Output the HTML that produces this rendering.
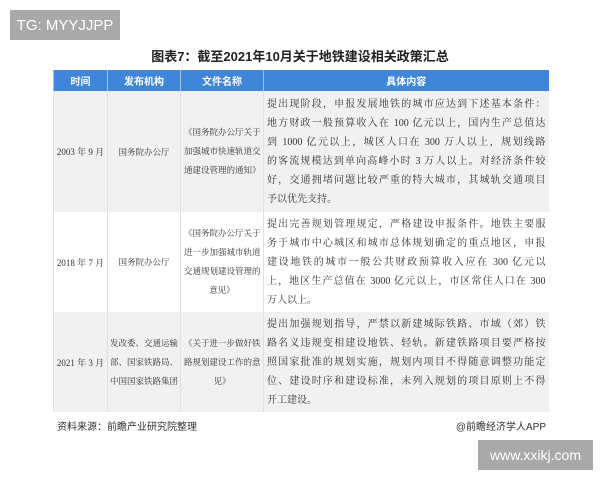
<!DOCTYPE html>
<html><head><meta charset="utf-8"><style>
*{margin:0;padding:0;box-sizing:border-box}
body{width:600px;height:480px;background:#fff;position:relative;font-family:"Liberation Serif","Noto Serif CJK SC","Noto Sans CJK SC",serif;color:#333;overflow:hidden}
.badge{position:absolute;background:#a9a9a9;color:#fff;font-family:"Liberation Sans",sans-serif;font-size:15px;display:flex;align-items:center;justify-content:center}
.title{position:absolute;top:46px;left:0;width:600px;text-align:center;font-family:"Liberation Sans","Noto Sans CJK SC",sans-serif;font-weight:bold;font-size:13px;color:#222}
table{position:absolute;left:53px;top:70px;width:495px;border-collapse:collapse;font-size:10px;table-layout:fixed}
th{background:#3f86db;color:#fff;height:21px;font-weight:bold;font-family:"Liberation Sans","Noto Sans CJK SC",sans-serif;border-left:1px solid #9fc3ee;font-size:10px;padding:0}
td{vertical-align:middle;text-align:center;border-left:1px solid #e0e0e0;padding:0 4px;overflow:hidden}
tr.g td{background:#f1f1f1}
.l{display:block;line-height:19px;text-align:justify;text-align-last:justify;white-space:nowrap}
.s{font-size:8.5px;padding:0 3px}
.o{font-size:8.5px;padding:0 3px}
.src{position:absolute;top:418px;font-size:10px;font-family:"Liberation Sans","Noto Sans CJK SC",sans-serif;color:#333}
</style></head><body>
<div class="badge" style="left:10px;top:10px;width:110px;height:30px">TG: MYYJJPP</div>
<div class="title">图表7：截至2021年10月关于地铁建设相关政策汇总</div>
<table>
<colgroup><col style="width:54px"><col style="width:73px"><col style="width:83px"><col style="width:285px"></colgroup>
<tr><th>时间</th><th>发布机构</th><th>文件名称</th><th>具体内容</th></tr>
<tr class="g" style="height:121px"><td style="white-space:nowrap;padding:0;font-size:9px">2003 年 9 月</td><td class="o" style="white-space:nowrap">国务院办公厅</td><td class="s"><span class="l">《国务院办公厅关于</span><span class="l">加强城市快速轨道交</span><span class="l">通建设管理的通知》</span></td>
<td style="padding:0 3px"><span class="l">提出现阶段，申报发展地铁的城市应达到下述基本条件：</span><span class="l">地方财政一般预算收入在 100 亿元以上，国内生产总值达</span><span class="l">到 1000 亿元以上，城区人口在 300 万人以上，规划线路</span><span class="l">的客流规模达到单向高峰小时 3 万人以上。对经济条件较</span><span class="l">好，交通拥堵问题比较严重的特大城市，其城轨交通项目</span><span class="l" style="text-align-last:left">予以优先支持。</span></td></tr>
<tr style="height:100px"><td style="white-space:nowrap;padding:0;font-size:9px">2018 年 7 月</td><td class="o" style="white-space:nowrap">国务院办公厅</td><td class="s"><span class="l">《国务院办公厅关于</span><span class="l">进一步加强城市轨道</span><span class="l">交通规划建设管理的</span><span class="l" style="text-align-last:center">意见》</span></td>
<td style="padding:0 3px"><span class="l">提出完善规划管理规定，严格建设申报条件。地铁主要服</span><span class="l">务于城市中心城区和城市总体规划确定的重点地区，申报</span><span class="l">建设地铁的城市一般公共财政预算收入应在 300 亿元以</span><span class="l">上，地区生产总值在 3000 亿元以上，市区常住人口在 300</span><span class="l" style="text-align-last:left">万人以上。</span></td></tr>
<tr class="g" style="height:100px"><td style="white-space:nowrap;padding:0;font-size:9px">2021 年 3 月</td><td class="o" style="padding:0 2px"><span class="l">发改委、交通运输</span><span class="l">部、国家铁路局、</span><span class="l">中国国家铁路集团</span></td><td class="s"><span class="l">《关于进一步做好铁</span><span class="l">路规划建设工作的意</span><span class="l" style="text-align-last:center">见》</span></td>
<td style="padding:0 3px"><span class="l">提出加强规划指导，严禁以新建城际铁路、市域（郊）铁</span><span class="l">路名义违规变相建设地铁、轻轨。新建铁路项目要严格按</span><span class="l">照国家批准的规划实施，规划内项目不得随意调整功能定</span><span class="l">位、建设时序和建设标准，未列入规划的项目原则上不得</span><span class="l" style="text-align-last:left">开工建设。</span></td></tr>
</table>
<div class="src" style="left:57px">资料来源：前瞻产业研究院整理</div>
<div class="src" style="right:54px">@前瞻经济学人APP</div>
<div class="badge" style="left:478px;top:440px;width:115px;height:30px;font-size:14px">www.xxikj.com</div>
</body></html>
